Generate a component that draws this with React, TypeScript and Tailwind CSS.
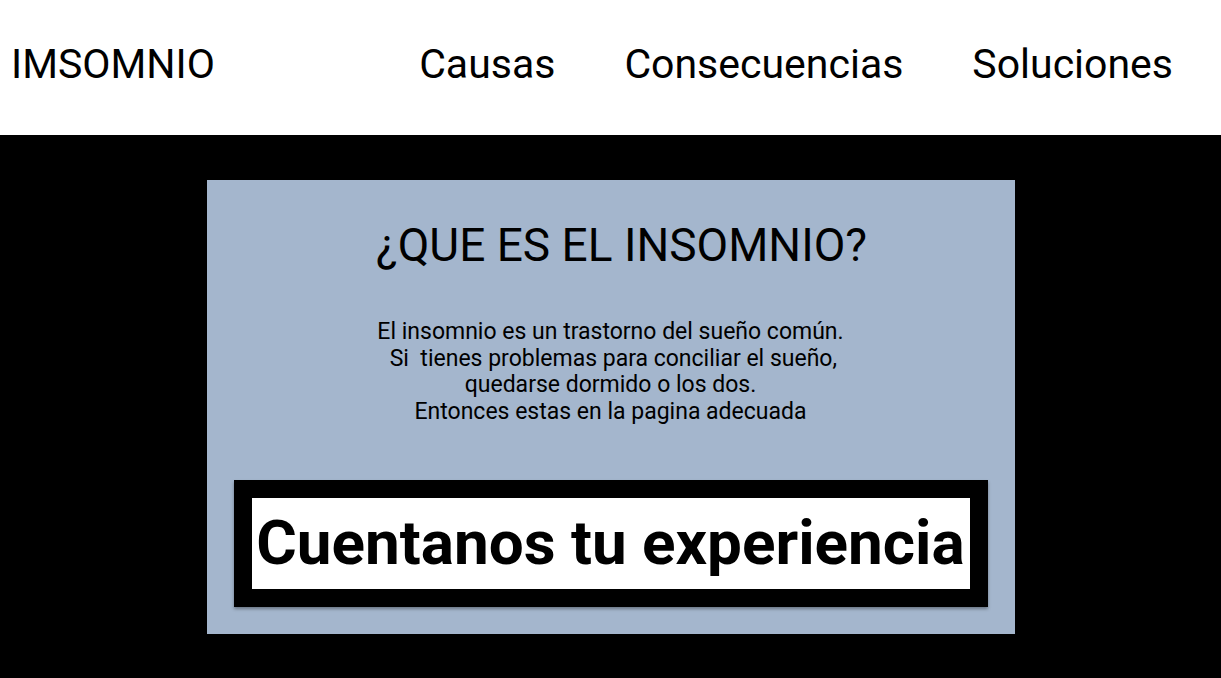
import React from "react";

const links = ["Causas", "Consecuencias", "Soluciones"];

export default function App() {
  return (
    <div className="min-h-[678px] bg-black font-['Roboto',sans-serif] text-black">
      <header className="flex h-[135px] items-center bg-white pb-[6px] pl-[11px] pr-[48px]">
        <div className="text-[41px] leading-none">IMSOMNIO</div>
        <nav className="ml-auto flex gap-[69px] text-[41px] leading-none">
          {links.map((l) => (
            <a key={l} href="#" className="text-black">
              {l}
            </a>
          ))}
        </nav>
      </header>

      <main className="pt-[45px] pb-[45px]">
        <section className="mx-auto flex h-[454px] w-[808px] flex-col items-center bg-[#a4b6cd] pt-[42px]">
          <h1 className="pl-[22px] text-[46px] leading-[46px]">¿QUE ES EL INSOMNIO?</h1>
          <p className="mt-[51px] text-center text-[23px] leading-[26.7px]">
            El insomnio es un trastorno del sueño común.
            <br />
            &nbsp;Si&nbsp; tienes problemas para conciliar el sueño,
            <br />
            quedarse dormido o los dos.
            <br />
            Entonces estas en la pagina adecuada
          </p>
          <button className="mt-[54px] h-[127px] w-[754px] border-[18px] border-black shadow-[0_2px_3px_rgba(0,0,0,0.35)]">
            <span className="flex h-full w-full items-center justify-center whitespace-nowrap bg-white text-[62px] font-bold leading-none">
              Cuentanos tu experiencia
            </span>
          </button>
        </section>
      </main>
    </div>
  );
}
